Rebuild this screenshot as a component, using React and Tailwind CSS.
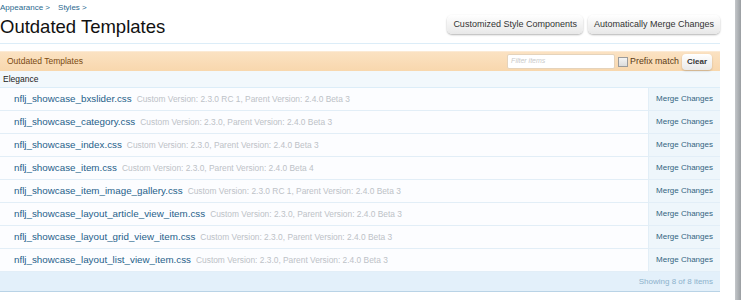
const ROWS = [
  ['nflj_showcase_bxslider.css', 'Custom Version: 2.3.0 RC 1, Parent Version: 2.4.0 Beta 3'],
  ['nflj_showcase_category.css', 'Custom Version: 2.3.0, Parent Version: 2.4.0 Beta 3'],
  ['nflj_showcase_index.css', 'Custom Version: 2.3.0, Parent Version: 2.4.0 Beta 3'],
  ['nflj_showcase_item.css', 'Custom Version: 2.3.0, Parent Version: 2.4.0 Beta 4'],
  ['nflj_showcase_item_image_gallery.css', 'Custom Version: 2.3.0 RC 1, Parent Version: 2.4.0 Beta 3'],
  ['nflj_showcase_layout_article_view_item.css', 'Custom Version: 2.3.0, Parent Version: 2.4.0 Beta 3'],
  ['nflj_showcase_layout_grid_view_item.css', 'Custom Version: 2.3.0, Parent Version: 2.4.0 Beta 3'],
  ['nflj_showcase_layout_list_view_item.css', 'Custom Version: 2.3.0, Parent Version: 2.4.0 Beta 3'],
]

function TopButton({ children }) {
  return (
    <button className="h-[19px] px-[6px] rounded-[5px] bg-gradient-to-b from-white to-[#e8e8e8] shadow-[0_1px_2px_rgba(0,0,0,0.3)] text-[9px] text-[#333] leading-none">
      {children}
    </button>
  )
}

export default function App() {
  return (
    <div className="flex h-[300px] w-[741px] bg-white overflow-hidden font-['Liberation_Sans',Arial,sans-serif]">
      <div className="w-[720px] flex flex-col">
        {/* title bar */}
        <div className="flex items-start border-b border-[#dcedf8] h-[44px]">
          <div className="flex-1">
            <div className="flex gap-[8px] pt-[4px] text-[8px] text-[#2b6a8f] leading-none">
              <span>Appearance &gt;</span>
              <span>Styles &gt;</span>
            </div>
            <h1 className="text-[18.5px] text-[#111] leading-none mt-[6px]">Outdated Templates</h1>
          </div>
          <div className="flex gap-[5px] pt-[15px]">
            <TopButton>Customized Style Components</TopButton>
            <TopButton>Automatically Merge Changes</TopButton>
          </div>
        </div>

        {/* list */}
        <div className="mt-[7px]">
          <div className="h-[20px] flex items-center bg-gradient-to-b from-[#fbe2c2] to-[#f8d7ad] border-t border-[#fcead4] pl-[7px] pr-[8px]">
            <span className="flex-1 text-[8.5px] text-[#7a4a12]">Outdated Templates</span>
            <div className="w-[108px] h-[15px] bg-white border border-[#e5d3bb] rounded-[2px] flex items-center px-[3px]">
              <span className="text-[7px] italic text-[#c9c9c9]">Filter items</span>
            </div>
            <div className="ml-[3px] w-[10px] h-[10px] border border-[#9b9b9b] bg-gradient-to-b from-[#f4f4f4] to-[#dcdcdc]" />
            <span className="ml-[2px] text-[8.8px] text-[#5a3a15]">Prefix match</span>
            <div className="ml-[3px] h-[16px] w-[30px] rounded-[4px] bg-gradient-to-b from-white to-[#eaeaea] shadow-[0_1px_2px_rgba(0,0,0,0.2)] flex items-center justify-center text-[8px] font-bold text-[#333]">
              Clear
            </div>
          </div>

          <div className="h-[17px] flex items-center bg-[#f2f8fc] border-b border-[#dcedf8] pl-[3px] text-[8.5px] font-medium text-[#222]">
            Elegance
          </div>

          {ROWS.map(([name, info]) => (
            <div key={name} className="h-[23px] flex bg-[#fcfdff] border-b border-[#e2eef7]">
              <div className="flex-1 flex items-center pl-[14px] gap-[5px] whitespace-nowrap">
                <span className="text-[9.8px] text-[#1f5f8a]">{name}</span>
                <span className="text-[8.4px] text-[#bcc2c7]">{info}</span>
              </div>
              <div className="w-[72px] flex items-center justify-center bg-[#eef6fb] border-l border-[#e2eef7] text-[8px] text-[#33647f]">
                Merge Changes
              </div>
            </div>
          ))}

          <div className="h-[20px] flex items-center justify-end pr-[7px] bg-[#e3f0fa] border-b border-[#b9d3e6] text-[8px] text-[#8db2cc]">
            Showing 8 of 8 items
          </div>
        </div>
      </div>
      <div className="w-[15px]" />
      <div className="w-[6px] h-full bg-gradient-to-r from-[#c4c7ca] to-[#9a9ea2]" />
    </div>
  )
}
